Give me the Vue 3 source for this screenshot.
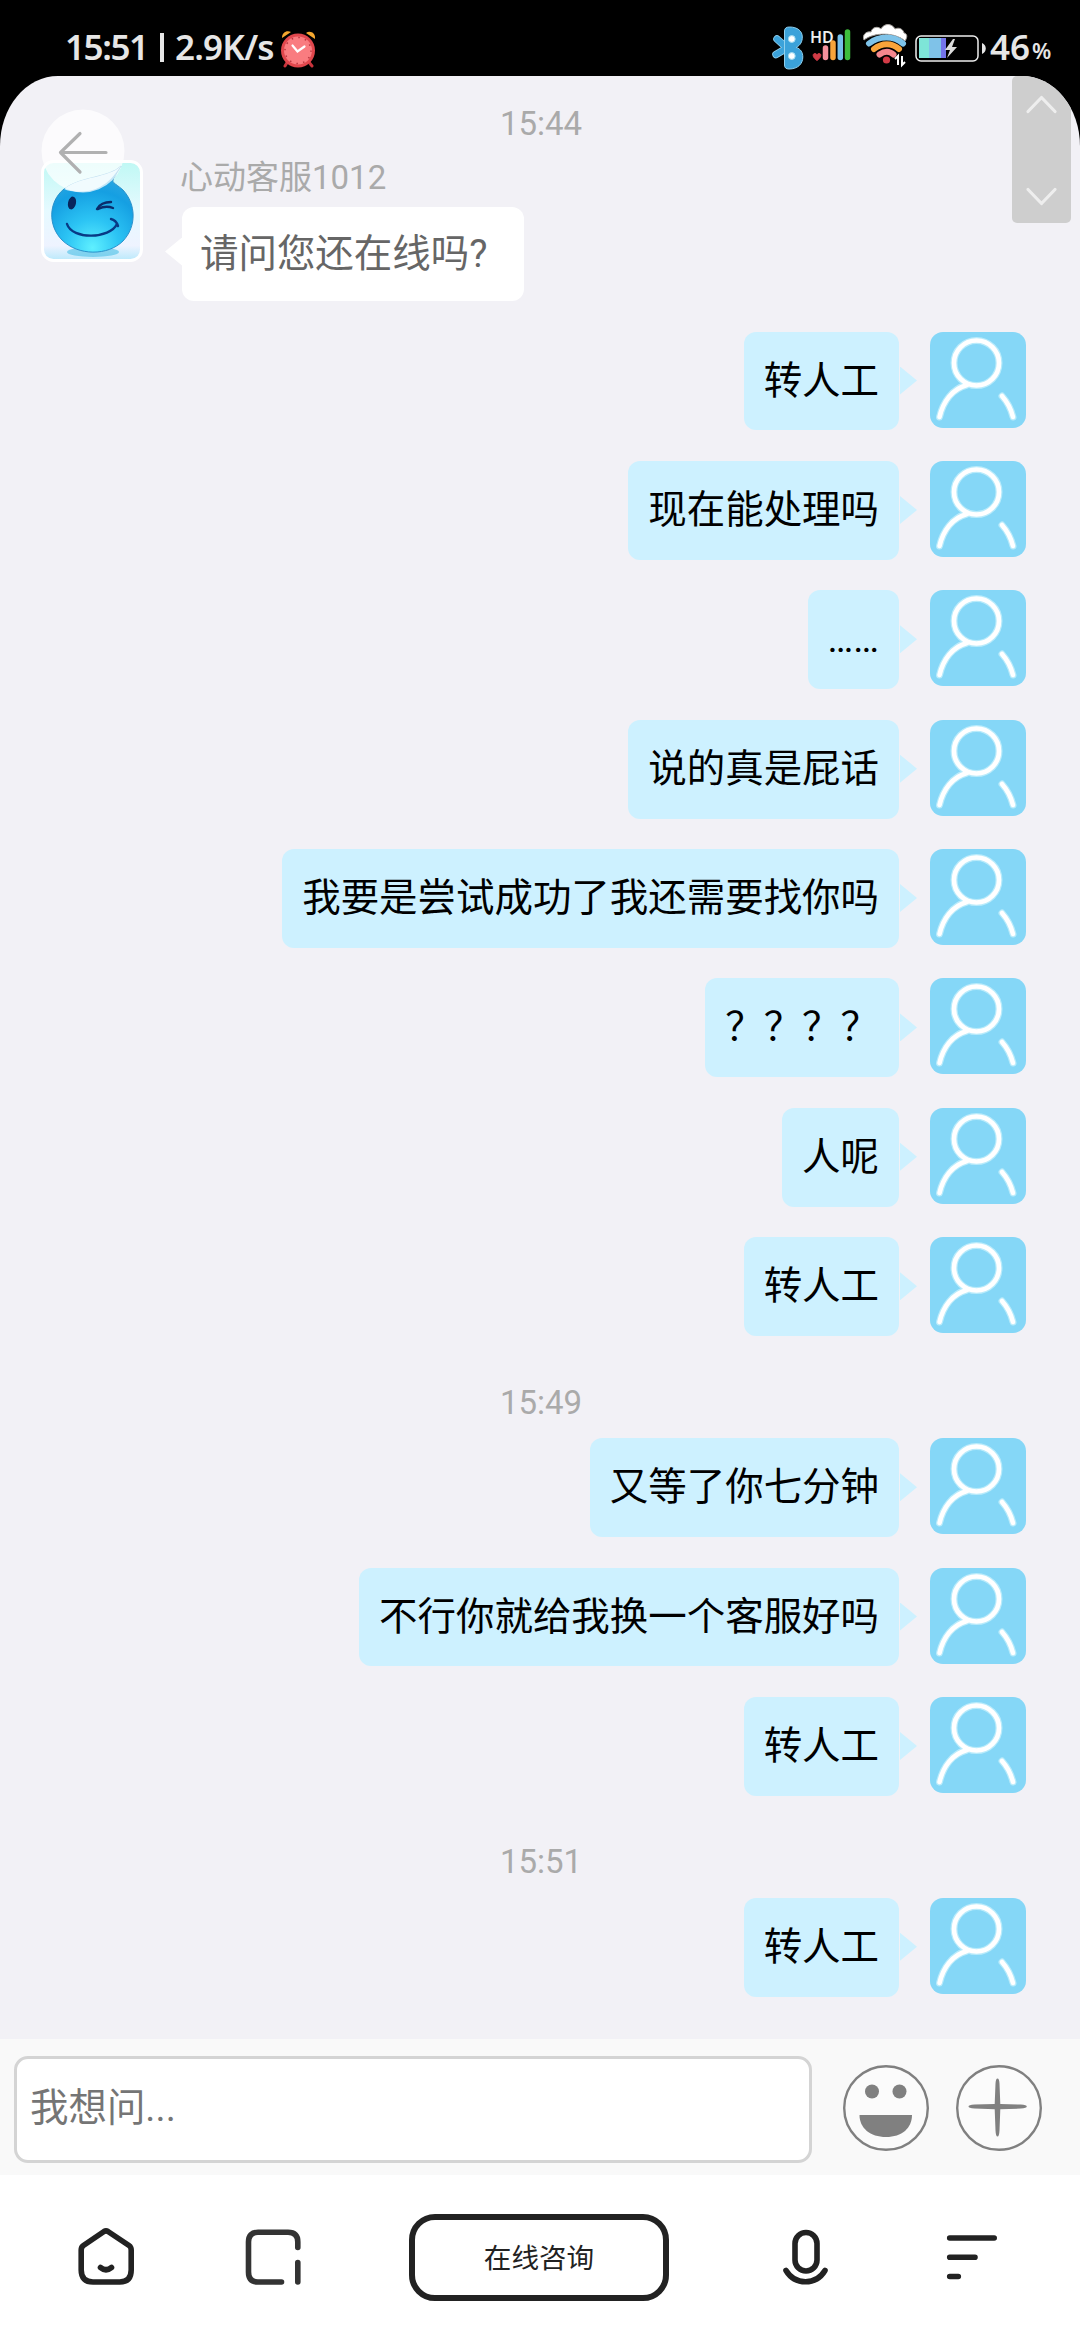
<script setup>
const items = [
  { type: 'time', text: '15:44' },
  { type: 'in', name: '心动客服1012', text: '请问您还在线吗?' },
  { type: 'out', text: '转人工' },
  { type: 'out', text: '现在能处理吗' },
  { type: 'out', text: '……' },
  { type: 'out', text: '说的真是屁话' },
  { type: 'out', text: '我要是尝试成功了我还需要找你吗' },
  { type: 'out', text: '？？？？' },
  { type: 'out', text: '人呢' },
  { type: 'out', text: '转人工' },
  { type: 'time', text: '15:49' },
  { type: 'out', text: '又等了你七分钟' },
  { type: 'out', text: '不行你就给我换一个客服好吗' },
  { type: 'out', text: '转人工' },
  { type: 'time', text: '15:51' },
  { type: 'out', text: '转人工' },
]
</script>

<template>
  <div class="screen" lang="zh-CN">
    <header class="status">
      <span class="clock">15:51</span>
      <i class="divider"></i>
      <span class="speed">2.9K/s</span>
      <svg class="alarm" width="36" height="38" viewBox="280 30 36 38">
        <path d="M288 61l-3 5M308 61l4 5" stroke="#c9343c" stroke-width="3" stroke-linecap="round" />
        <path d="M282 38c0-6 5-8 9-6zM315 39c1-6-5-9-9-6z" fill="#f5a72f" />
        <circle cx="298" cy="50.500" r="15.500" fill="#f97c80" stroke="#e0474d" stroke-width="3" />
        <circle cx="298" cy="50.500" r="13" fill="none" stroke="#b8363f" stroke-width="1.500" stroke-dasharray="1.500 5.300" />
        <path d="M292.500 45.500l5 6 7-5" fill="none" stroke="#fff" stroke-width="2.200" stroke-linecap="round" />
      </svg>

      <svg class="tray" width="216" height="50" viewBox="770 22 216 50">
        <g fill="none" stroke-linecap="round">
          <path d="M777 39l10 9M776 54.500l12-7" stroke="#8fd0ee" stroke-width="7.500" />
          <path d="M777 39l10 9M776 54.500l12-7" stroke="#3ba2da" stroke-width="5.800" />
        </g>
        <path d="M784.500 31q0-4 5-4c8 0 12.800 4 12.800 10 0 5-2 8-6 10.500 4.500 1.500 6.500 5 6.500 9.500 0 7-5 12-13.800 12q-4.500 0-4.500-4z" fill="#3ba2da" stroke="#8fd0ee" stroke-width="1" />
        <g fill="#fff" stroke="#9edaf2"><circle cx="791.800" cy="39" r="3.400" /><circle cx="791.800" cy="56" r="3.400" /></g>

        <text class="hd" x="810" y="43">HD</text>
        <path d="M817 60.500c-5-3.500-4.500-7-2-7 1.200 0 2 1.200 2 1.200s.8-1.200 2-1.200c2.500 0 3 3.500-2 7z" fill="#d03b46" stroke="#d03b46" />
        <g stroke-width="5.500" stroke-linecap="round">
          <path d="M825.500 48v9.500" stroke="#f4909c" />
          <path d="M833 43v14.500" stroke="#f8a53a" />
          <path d="M840.300 37v20.500" stroke="#77c0ea" />
          <path d="M847.500 32v25.500" stroke="#3ebd3c" />
        </g>

        <path d="M864 40c-2-5 2-9 7-8 1-5 7-6 10-3 3-6 11-6 14 0 4-2 8 0 9 4 4 1 3 5 1 8-10-9-31-9-41-1z" fill="#fff" stroke="#a9a4a0" stroke-width="1" />
        <g fill="none" stroke-linecap="round" stroke-width="6">
          <path d="M869 43.500c10-8 25-8 34 0" stroke="#7ec3e9" />
          <path d="M874 49c8-6.500 18-6.500 25 0" stroke="#f9a43a" />
          <path d="M879.500 54.500c5-3.500 10-3.500 14 0" stroke="#f4878e" />
        </g>
        <circle cx="886.500" cy="60" r="3.600" fill="#d33b47" />
        <path d="M898 65V56l-3 3M902 56v9l3-3" fill="none" stroke="#fff" stroke-width="2" />

        <rect x="916" y="36" width="62" height="25" rx="5" fill="none" stroke="#eee" stroke-width="1.500" />
        <path d="M919 38h10v20h-10z" fill="#7ee5d8" />
        <path d="M929 38h12v20h-12z" fill="#7fc2e8" />
        <path d="M941 38h5v20h-5z" fill="#7474ea" />
        <path d="M953 39l-8 11h5l-3 8 10-11h-5l3-8z" fill="#ddd" />
        <path d="M982 43c5 2 5 9 0 11z" fill="#e5e5e5" />
      </svg>
      <span class="battery">46</span><span class="percent">%</span>
    </header>

    <main class="chat">
      <template v-for="(item, i) in items" :key="i">
        <p v-if="item.type === 'time'" class="time">{{ item.text }}</p>

        <article v-else-if="item.type === 'in'" class="row-in">
          <svg class="agent" width="102" height="102" viewBox="0 0 102 102">
            <defs>
              <radialGradient id="drop" cx="50%" cy="95%" r="95%">
                <stop offset="0" stop-color="#5ff0ff" />
                <stop offset=".35" stop-color="#2cc4f4" />
                <stop offset=".7" stop-color="#159fe2" />
                <stop offset="1" stop-color="#35a9e0" />
              </radialGradient>
              <linearGradient id="sky" x2="0" y2="1">
                <stop offset="0" stop-color="#bff8f4" />
                <stop offset=".5" stop-color="#e6faff" />
                <stop offset=".85" stop-color="#eef3ff" />
                <stop offset="1" stop-color="#b9e9fb" />
              </linearGradient>
            </defs>
            <rect x="1.500" y="1.500" width="99" height="99" rx="11" fill="url(#sky)" stroke="#fff" stroke-width="3" />
            <ellipse cx="52" cy="92" rx="26" ry="5" fill="#4bbfe6" opacity=".6" />
            <path d="M80 6C68 18 40 16 23 29 7 42 7 66 21 80c16 16 46 16 61 1 14-15 13-37 0-51-9-8-13-7-8-14z" fill="url(#drop)" stroke="#2a91cb" stroke-width="1" />
            <path d="M80 6C68 18 40 16 23 29c8 4 25 4 36-2 9-5 13-10 21-21z" fill="#cceffc" />
            <ellipse cx="31" cy="43" rx="4" ry="6.500" fill="#08255c" transform="rotate(12 31 43)" />
            <path d="M56 49Q60 42 70 42M57 49q8-4 15-1" fill="none" stroke="#0a2d6c" stroke-width="2.400" stroke-linecap="round" />
            <path d="M26 64c5 16 43 15 50 0M70 59q5 1 7 7" fill="none" stroke="#083a85" stroke-width="2.400" stroke-linecap="round" />
          </svg>
          <div class="body">
            <div class="name">{{ item.name }}</div>
            <div class="bubble white">{{ item.text }}</div>
          </div>
        </article>

        <article v-else class="row-out">
          <div class="bubble blue">{{ item.text }}</div>
          <svg class="user" width="96" height="96" viewBox="0 0 96 96">
            <g fill="none" stroke-linecap="round">
              <g stroke="#b9ebfb" stroke-width="7">
                <circle cx="46.500" cy="31" r="22.500" />
                <path d="M9.500 85C13 70 22 57 37 53M72 64q8 9 11 21" />
              </g>
              <g stroke="#fff" stroke-width="4.600">
                <circle cx="46.500" cy="31" r="22.500" />
                <path d="M9.500 85C13 70 22 57 37 53M72 64q8 9 11 21" />
              </g>
            </g>
          </svg>
        </article>
      </template>

      <svg class="back" width="84" height="84" viewBox="0 0 84 84">
        <circle cx="42" cy="42" r="41.500" fill="#fff" opacity=".72" />
        <path d="M65 43.500H19.500M39 24.500l-19.500 19 19.500 19.500" fill="none" stroke="#b0b0b1" stroke-width="3.200" stroke-linecap="round" stroke-linejoin="round" />
      </svg>
      <svg class="scroller" width="59" height="147" viewBox="0 0 59 147">
        <rect width="59" height="147" rx="5" fill="#cecece" />
        <path d="M16 35.500l13.500-14 13.500 14M16 113.500l13.500 14 13.500-14" fill="none" stroke="#eee" stroke-width="3.200" stroke-linecap="round" stroke-linejoin="round" />
      </svg>
    </main>

    <section class="composer">
      <div class="input">我想问...</div>
      <svg class="smile" width="86" height="86" viewBox="0 0 86 86">
        <circle cx="43" cy="43" r="41.800" fill="#fbfbfb" stroke="#808080" stroke-width="2.400" />
        <g fill="#808080"><circle cx="29" cy="26.500" r="7" /><circle cx="56.500" cy="26.500" r="7" /><path d="M16.500 50h52.500c0 13-10 22-26 22s-26.500-9-26.500-22z" /></g>
      </svg>
      <svg width="86" height="86" viewBox="0 0 86 86">
        <circle cx="43" cy="43" r="41.800" fill="#fbfbfb" stroke="#808080" stroke-width="2.400" />
        <path d="M41.500 13.500q1.700 0 2 5l.8 20.500 20.500.6q6 .4 6 2t-6 2l-20.500.7-.8 21.200q-.3 6-2 6t-2-6l-.8-21.200-20.200-.7q-6-.4-6-2t6-2l20.200-.6.8-20.500q.3-5 2-5z" fill="#808080" />
      </svg>
    </section>

    <nav class="toolbar">
      <svg width="60" height="60" viewBox="0 0 60 60" stroke="#222">
        <path d="M28 4.500q2-1.200 4 0l21 14q2.200 1.500 2.200 4.500v20q0 12-11.500 12H17Q5.200 55 5.200 43V23q0-3 2.200-4.500z" />
        <path d="M24.500 40.500q5.500 4.500 11 0" />
      </svg>
      <svg width="60" height="60" viewBox="0 0 60 60" stroke="#333">
        <path d="M38.500 55H15Q5.500 55 5.500 45V15q0-9.700 9.500-9.700h30q9.800 0 9.800 9.700v5.500M54.800 35.500V55" />
      </svg>
      <div class="pill">在线咨询</div>
      <svg width="60" height="60" viewBox="0 0 60 60" stroke="#222">
        <rect x="19" y="5.500" width="22" height="38.500" rx="11" />
        <path d="M10 43.500c9 15 30 15 39 0" />
      </svg>
      <svg width="60" height="60" viewBox="0 0 60 60" stroke="#222">
        <path d="M7.700 11h44.500M7.700 30.200H33M7.700 49.500h8.600" />
      </svg>
    </nav>
  </div>
</template>

<style>
body { background: #000; }
</style>

<style scoped>
.screen {
  width: 1080px;
  height: 2340px;
  display: flex;
  flex-direction: column;
  overflow: hidden;
  background: #000;
  font-family: Roboto, "Noto Sans CJK SC", sans-serif;
}
.status {
  height: 76px;
  flex: none;
  display: flex;
  align-items: flex-start;
  color: #e6e6e6;
  font: 600 35px/48px "Noto Sans", sans-serif;
  white-space: nowrap;
}
.clock { margin: 23px 0 0 65px; width: 85px; letter-spacing: -1.4px; }
.divider { width: 4px; height: 29px; margin: 33px 0 0 10px; background: #e6e6e6; }
.speed { margin: 23px 0 0 11px; width: 99px; letter-spacing: -0.8px; }
.alarm { margin: 30px 0 0 6px; }
.tray { margin: 22px 0 0 454px; }
.hd { font: 600 16px "Noto Sans", sans-serif; fill: #eee; }
.battery { margin: 23px 0 0 4px; width: 41px; }
.percent { margin: 26px 0 0 1px; font-size: 22px; }

.chat {
  position: relative;
  flex: none;
  height: 1963px;
  box-sizing: border-box;
  padding-top: 11.5px;
  background: #f2f1f6;
  border-radius: 58px 58px 0 0 / 70px 70px 0 0;
  overflow: hidden;
}
.time {
  margin: 0;
  height: 71.5px;
  font-size: 33px;
  line-height: 71.5px;
  text-align: center;
  color: #aaa;
  padding-left: 2px;
}
.row-in { display: flex; height: 142px; margin-bottom: 30.5px; padding-left: 41px; }
.agent { flex: none; margin: 0.5px 37px 0 0; }
.name { height: 47.5px; line-height: 38px; font-size: 33px; color: #aaa; }
.bubble {
  position: relative;
  box-sizing: border-box;
  border-radius: 12px;
  padding: 0 20px;
  font-size: 38.46px;
  white-space: nowrap;
}
.bubble::after { content: ""; position: absolute; width: 17px; height: 28px; }
.white {
  width: 342px;
  height: 94px;
  margin-left: 2px;
  padding-left: 18px;
  line-height: 93px;
  color: #666;
  background: #fff;
}
.white::after { left: -17px; top: 31px; background: #fff; clip-path: polygon(100% 0, 0 50%, 100% 100%); }
.row-out { display: flex; justify-content: flex-end; height: 98.9px; margin-bottom: 30.5px; padding-right: 54px; }
.blue { height: 98.9px; line-height: 98.9px; margin-right: 31px; color: #000; background: #cdf1ff; }
.blue::after { right: -18px; top: 35px; background: #cdf1ff; clip-path: polygon(0 0, 100% 50%, 0 100%); }
.user { flex: none; border-radius: 13px; background: #85d7f7; }

.back { position: absolute; left: 41px; top: 33px; }
.scroller { position: absolute; left: 1012px; top: 0; }

.composer {
  flex: none;
  height: 136px;
  display: flex;
  background: #f9f9f9;
}
.composer svg { margin: 26px 27px 0 0; }
.input {
  box-sizing: border-box;
  width: 798px;
  height: 107px;
  margin: 17px 31px 0 14px;
  padding-left: 13px;
  border: 3px solid #d4d4d4;
  border-radius: 14px;
  background: #fff;
  color: #757575;
  font-size: 38.46px;
  line-height: 97px;
}
.toolbar {
  flex: 1;
  display: flex;
  justify-content: space-between;
  align-items: flex-start;
  padding: 52px 78px 0 76px;
  background: #fff;
}
.toolbar svg { fill: none; stroke-width: 5.6; stroke-linecap: round; stroke-linejoin: round; }
.pill {
  box-sizing: border-box;
  width: 260px;
  height: 87px;
  margin-top: -13px;
  border: 6px solid #222;
  border-radius: 26px;
  font-size: 27.6px;
  line-height: 78px;
  text-align: center;
  color: #222;
}
</style>
